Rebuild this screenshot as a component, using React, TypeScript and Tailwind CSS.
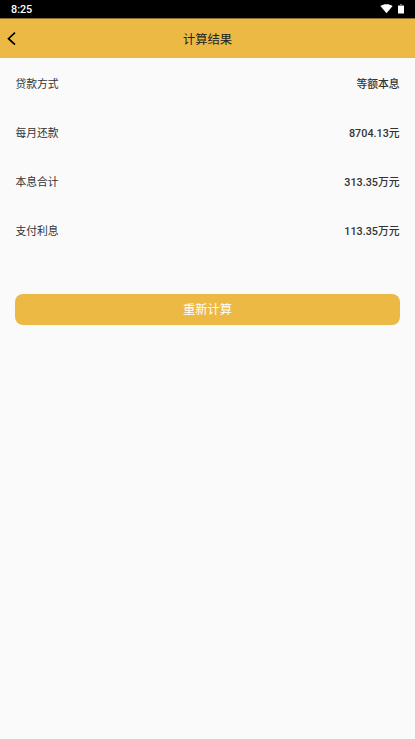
interface Row {
  label: string
  value: string
}

const rows: Row[] = [
  { label: "贷款方式", value: "等额本息" },
  { label: "每月还款", value: "8704.13元" },
  { label: "本息合计", value: "313.35万元" },
  { label: "支付利息", value: "113.35万元" },
]

function StatusBar() {
  return (
    <div className="flex h-[18px] items-center justify-between bg-black pr-[11px] pl-[11px] text-white">
      <span className="pt-px text-[10.8px] leading-[18px] font-medium">8:25</span>
      <div className="flex items-center gap-[5px]">
        <svg width="13" height="10" viewBox="0 0 13 10" fill="currentColor">
          <path d="M6.5 9.3.4 2C2.2.9 4.2.3 6.5.3s4.3.6 6.1 1.7z" />
        </svg>
        <svg width="6" height="10" viewBox="0 0 6 10">
          <path d="M2 0h2v1h2v2H0V1h2z" fill="#777" />
          <path d="M0 2h6v7.5H0z" fill="#fff" />
        </svg>
      </div>
    </div>
  )
}

export default function App() {
  return (
    <div className="flex min-h-screen flex-col bg-[#fafafa] font-[Roboto,'Noto_Sans_CJK_SC',sans-serif] text-[#333]">
      <StatusBar />

      <header className="grid h-10 grid-cols-[1fr_auto_1fr] items-center border-t border-[#8a6b28] bg-[#ecb945] px-[7px]">
        <button aria-label="返回" className="text-black">
          <svg width="9" height="14" viewBox="0 0 9 14" fill="none" stroke="currentColor" strokeWidth="1.7">
            <path d="M8 .7 1.5 6.7 8 12.7" />
          </svg>
        </button>
        <h1 className="pt-[3px] text-[12.3px] text-[#222]">计算结果</h1>
      </header>

      <main className="px-[15.4px] pt-[2px]">
        {rows.map((row) => (
          <div key={row.label} className="flex h-[49.2px] items-center justify-between text-[10.8px]">
            <span>{row.label}</span>
            <span className="font-medium">{row.value}</span>
          </div>
        ))}

        <button className="mt-[37.3px] h-[31px] w-full rounded-[8px] bg-[#ecb945] pt-[2px] text-[12.3px] text-white">
          重新计算
        </button>
      </main>
    </div>
  )
}
